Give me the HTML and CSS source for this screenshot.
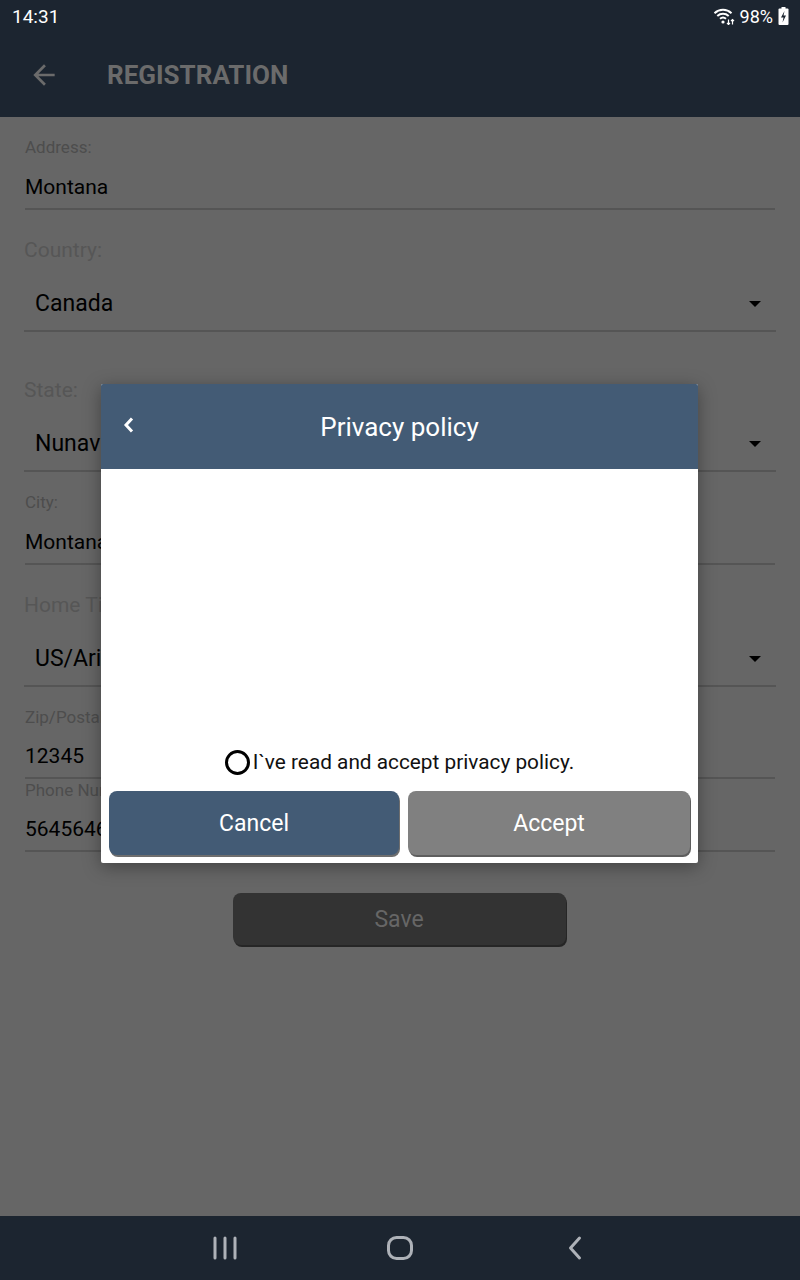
FILE: index.html
```html
<!DOCTYPE html>
<html lang="en">
<head>
    <meta charset="UTF-8">
    <meta name="viewport" content="width=device-width, initial-scale=1.0">
    <title>Registration</title>
    <link rel="stylesheet" href="styles.css">
</head>
<body>
    <div class="screen">
        <div class="status-bar">
            <span class="clock">14:31</span>
            <div class="status-icons">
                <svg class="wifi" width="22" height="18" viewBox="0 0 22 18">
                    <path d="M1.5 6.2 A12.5 12.5 0 0 1 18.5 6.2" fill="none" stroke="#fff" stroke-width="2"/>
                    <path d="M4.3 9 A8.5 8.5 0 0 1 15.7 9" fill="none" stroke="#fff" stroke-width="2"/>
                    <path d="M7 11.8 A4.6 4.6 0 0 1 13 11.8" fill="none" stroke="#fff" stroke-width="2"/>
                    <circle cx="10" cy="15" r="1.6" fill="#fff"/>
                    <path d="M15.5 12.5 V17.5 M14 16 L15.5 17.5 L17 16" fill="none" stroke="#fff" stroke-width="1.2"/>
                    <path d="M19.5 17.5 V12.5 M18 14 L19.5 12.5 L21 14" fill="none" stroke="#fff" stroke-width="1.2"/>
                </svg>
                <span class="battery-level">98%</span>
                <svg class="battery" width="11" height="18" viewBox="0 0 11 18">
                    <rect x="3.5" y="0" width="4" height="2" fill="#fff"/>
                    <rect x="0.5" y="1.5" width="10" height="16.5" rx="1" fill="#fff"/>
                    <path d="M6.5 4 L3 10.5 H5.5 L4.5 15.5 L8 8.5 H5.5 Z" fill="#1c2530"/>
                </svg>
            </div>
        </div>

        <div class="app-bar">
            <svg class="back-arrow" width="32" height="32" viewBox="0 0 24 24">
                <path d="M20 11H7.83l5.59-5.59L12 4l-8 8 8 8 1.41-1.41L7.83 13H20v-2z" fill="#6b6b6b"/>
            </svg>
            <span class="app-title">REGISTRATION</span>
        </div>

        <div class="content">
            <div class="field gap-address">
                <div class="field-label">Address:</div>
                <div class="field-value">Montana</div>
            </div>
            <div class="field spinner gap-l">
                <div class="field-label large">Country:</div>
                <div class="field-value">Canada<span class="caret"></span></div>
            </div>
            <div class="field spinner gap-xl">
                <div class="field-label large">State:</div>
                <div class="field-value">Nunavut<span class="caret"></span></div>
            </div>
            <div class="field gap-m">
                <div class="field-label">City:</div>
                <div class="field-value">Montana</div>
            </div>
            <div class="field spinner gap-l">
                <div class="field-label large">Home Timezone:</div>
                <div class="field-value">US/Arizona<span class="caret"></span></div>
            </div>
            <div class="field gap-m">
                <div class="field-label">Zip/Postal Code:</div>
                <div class="field-value tight">12345</div>
            </div>
            <div class="field gap-s">
                <div class="field-label">Phone Number:</div>
                <div class="field-value tight">5645646456</div>
            </div>

            <div class="save-row">
                <button class="save-button" type="button">Save</button>
            </div>
        </div>

        <div class="nav-bar">
            <svg width="30" height="26" viewBox="0 0 30 26">
                <path d="M5 3 V23 M15 3 V23 M25 3 V23" stroke="#aeb2b8" stroke-width="3" stroke-linecap="round"/>
            </svg>
            <svg width="30" height="26" viewBox="0 0 30 26">
                <rect x="3.5" y="2.5" width="23" height="21" rx="8" fill="none" stroke="#aeb2b8" stroke-width="3"/>
            </svg>
            <svg width="30" height="26" viewBox="0 0 30 26">
                <path d="M19.5 3 L10.5 13 L19.5 23" fill="none" stroke="#aeb2b8" stroke-width="3" stroke-linecap="round" stroke-linejoin="round"/>
            </svg>
        </div>

        <!-- privacy policy dialog, shown over the dimmed form -->
        <div class="dialog">
            <div class="dialog-header">
                <svg class="dialog-back" width="12" height="16" viewBox="0 0 12 16">
                    <path d="M9 1.5 L3 8 L9 14.5" fill="none" stroke="#fff" stroke-width="3"/>
                </svg>
                <span class="dialog-title">Privacy policy</span>
                <span></span>
            </div>
            <div class="policy-text"></div>
            <label class="consent">
                <span class="radio"></span>
                <span>I`ve read and accept privacy policy.</span>
            </label>
            <div class="dialog-buttons">
                <button class="btn btn-cancel" type="button">Cancel</button>
                <button class="btn btn-accept" type="button">Accept</button>
            </div>
        </div>
    </div>
</body>
</html>
```

FILE: styles.css
```css
body {
    margin: 0;
    font-family: Roboto, "Noto Sans", sans-serif;
}
.screen {
    position: relative;
    width: 800px;
    height: 1280px;
    display: flex;
    flex-direction: column;
    background-color: #666;
    overflow: hidden;
}
.status-bar {
    height: 32px;
    flex-shrink: 0;
    background-color: #1c2530;
    color: #fff;
    display: flex;
    align-items: center;
    justify-content: space-between;
    padding: 0 11px 0 12px;
    font-size: 19px;
}
.status-icons {
    display: flex;
    align-items: center;
    gap: 5px;
}
.battery-level {
    font-size: 18px;
}
.app-bar {
    height: 85px;
    flex-shrink: 0;
    background-color: #1c2530;
    display: flex;
    align-items: center;
    padding-left: 28px;
    gap: 47px;
}
.app-title {
    color: #6b6b6b;
    font-size: 26px;
    font-weight: bold;
}
.content {
    flex: 1;
    padding: 0 25px;
}
.field {
    border-bottom: 2px solid #555;
}
.gap-address { margin-top: 20px; }
.gap-s { margin-top: 1px; }
.gap-m { margin-top: 20px; }
.gap-l { margin-top: 28px; }
.gap-xl { margin-top: 46px; }
.field-label {
    font-size: 17px;
    line-height: 20px;
    color: #4d4d4d;
}
.field-label.large {
    font-size: 21px;
    line-height: 24px;
    color: #565656;
}
.field-value {
    margin-top: 10px;
    font-size: 21px;
    line-height: 41px;
    color: #000;
}
.field-value.tight {
    margin-top: 9px;
}
.spinner {
    margin-left: -1px;
    margin-right: -1px;
}
.spinner .field-value {
    margin-top: 20px;
    padding: 0 15px 4px 11px;
    font-size: 23px;
    line-height: 44px;
    display: flex;
    align-items: center;
    justify-content: space-between;
}
.caret {
    width: 0;
    height: 0;
    border-left: 6px solid transparent;
    border-right: 6px solid transparent;
    border-top: 6px solid #000;
}
.save-row {
    display: flex;
    justify-content: center;
    margin-top: 41px;
}
.save-button {
    width: 333px;
    height: 52px;
    margin-left: -2px;
    border: none;
    border-radius: 8px;
    background-color: #333;
    box-shadow: 1px 2px 0 #262626;
    color: #666;
    font-family: Roboto, "Noto Sans", sans-serif;
    font-size: 23px;
}
.nav-bar {
    height: 64px;
    flex-shrink: 0;
    background-color: #1c2530;
    display: flex;
    align-items: center;
    justify-content: center;
    gap: 145px;
}
.dialog {
    position: absolute;
    top: 384px;
    left: 101px;
    width: 597px;
    background-color: #fff;
    border-radius: 2px;
    box-shadow: 0 4px 18px rgba(0, 0, 0, 0.35);
    overflow: hidden;
}
.dialog-header {
    height: 85px;
    background-color: #435b75;
    display: grid;
    grid-template-columns: 1fr auto 1fr;
    align-items: center;
    padding-left: 22px;
    padding-right: 22px;
}
.dialog-back {
    margin-top: -4px;
}
.dialog-title {
    color: #fff;
    font-size: 26px;
}
.policy-text {
    height: 278px;
}
.consent {
    height: 30px;
    display: flex;
    align-items: center;
    justify-content: center;
    gap: 3px;
    font-size: 20.8px;
    color: #111;
    margin-bottom: 14px;
}
.radio {
    width: 19px;
    height: 19px;
    border: 3px solid #000;
    border-radius: 50%;
}
.dialog-buttons {
    display: grid;
    grid-template-columns: 290px 282px;
    gap: 9px;
    padding: 0 8px 8px 8px;
}
.btn {
    height: 64px;
    padding-top: 2px;
    border: none;
    border-radius: 8px;
    color: #fff;
    font-family: Roboto, "Noto Sans", sans-serif;
    font-size: 23px;
}
.btn-cancel {
    background-color: #435b75;
    box-shadow: 1px 2px 0 #6e6e6e;
}
.btn-accept {
    background-color: #808080;
    box-shadow: 1px 2px 0 #5e5e5e;
}
```
